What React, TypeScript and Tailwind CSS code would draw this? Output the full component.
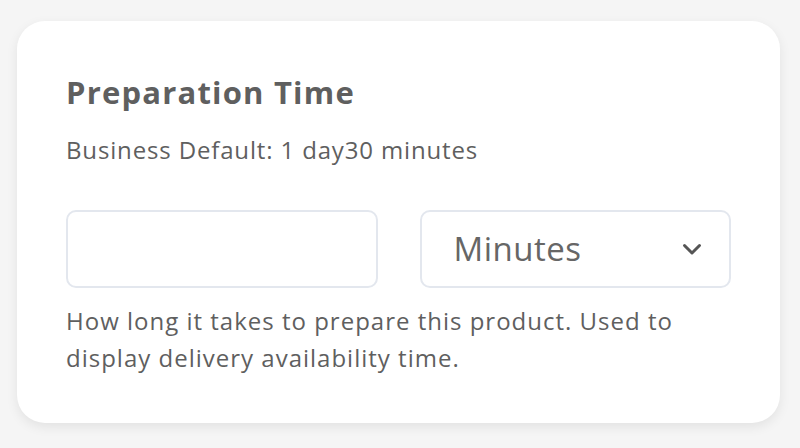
import { useState } from "react";

const font = { fontFamily: '"Open Sans", "Noto Sans", sans-serif' };

export default function App() {
  const [amount, setAmount] = useState<string>("");
  const [unit, setUnit] = useState<string>("minutes");

  return (
    <div className="w-[800px] h-[448px] bg-[#f5f5f5] pt-[21px] pl-[17px]" style={font}>
      <div className="w-[763px] h-[402px] bg-white rounded-[28px] shadow-[0_4px_12px_rgba(0,0,0,0.08)] px-[49px] pt-[51px]">
        <h2 className="text-[31px] leading-[40px] font-bold tracking-[1.2px] text-[#5f5f5f]">Preparation Time</h2>
        <p className="mt-[22px] text-[24px] leading-[32px] tracking-[0.85px] text-[#5f5f5f]">
          Business Default: 1 day30 minutes
        </p>
        <div className="mt-[44px] grid grid-cols-2 gap-[42px]">
          <input
            type="text"
            value={amount}
            onChange={(e: React.ChangeEvent<HTMLInputElement>) => setAmount(e.target.value)}
            className="h-[78px] rounded-[10px] border-2 border-[#e3e7ee] px-4 text-[30px] text-[#5f5f5f] outline-none"
          />
          <div className="relative">
            <select
              value={unit}
              onChange={(e: React.ChangeEvent<HTMLSelectElement>) => setUnit(e.target.value)}
              className="appearance-none w-full h-[78px] rounded-[10px] border-2 border-[#e3e7ee] bg-white pl-[32px] text-[33px] tracking-[0.5px] text-[#666] outline-none"
            >
              <option value="minutes">Minutes</option>
              <option value="hours">Hours</option>
              <option value="days">Days</option>
            </select>
            <svg
              className="absolute right-[29px] top-[33px] pointer-events-none"
              width="20"
              height="14"
              viewBox="0 0 20 14"
              fill="none"
              stroke="#555"
              strokeWidth="3"
              strokeLinecap="round"
              strokeLinejoin="round"
            >
              <path d="M2.5 2.5L10 10l7.5-7.5" />
            </svg>
          </div>
        </div>
        <p className="mt-[15px] text-[24px] leading-[36.5px] tracking-[1px] text-[#5f5f5f]">
          How long it takes to prepare this product. Used to display delivery availability time.
        </p>
      </div>
    </div>
  );
}
